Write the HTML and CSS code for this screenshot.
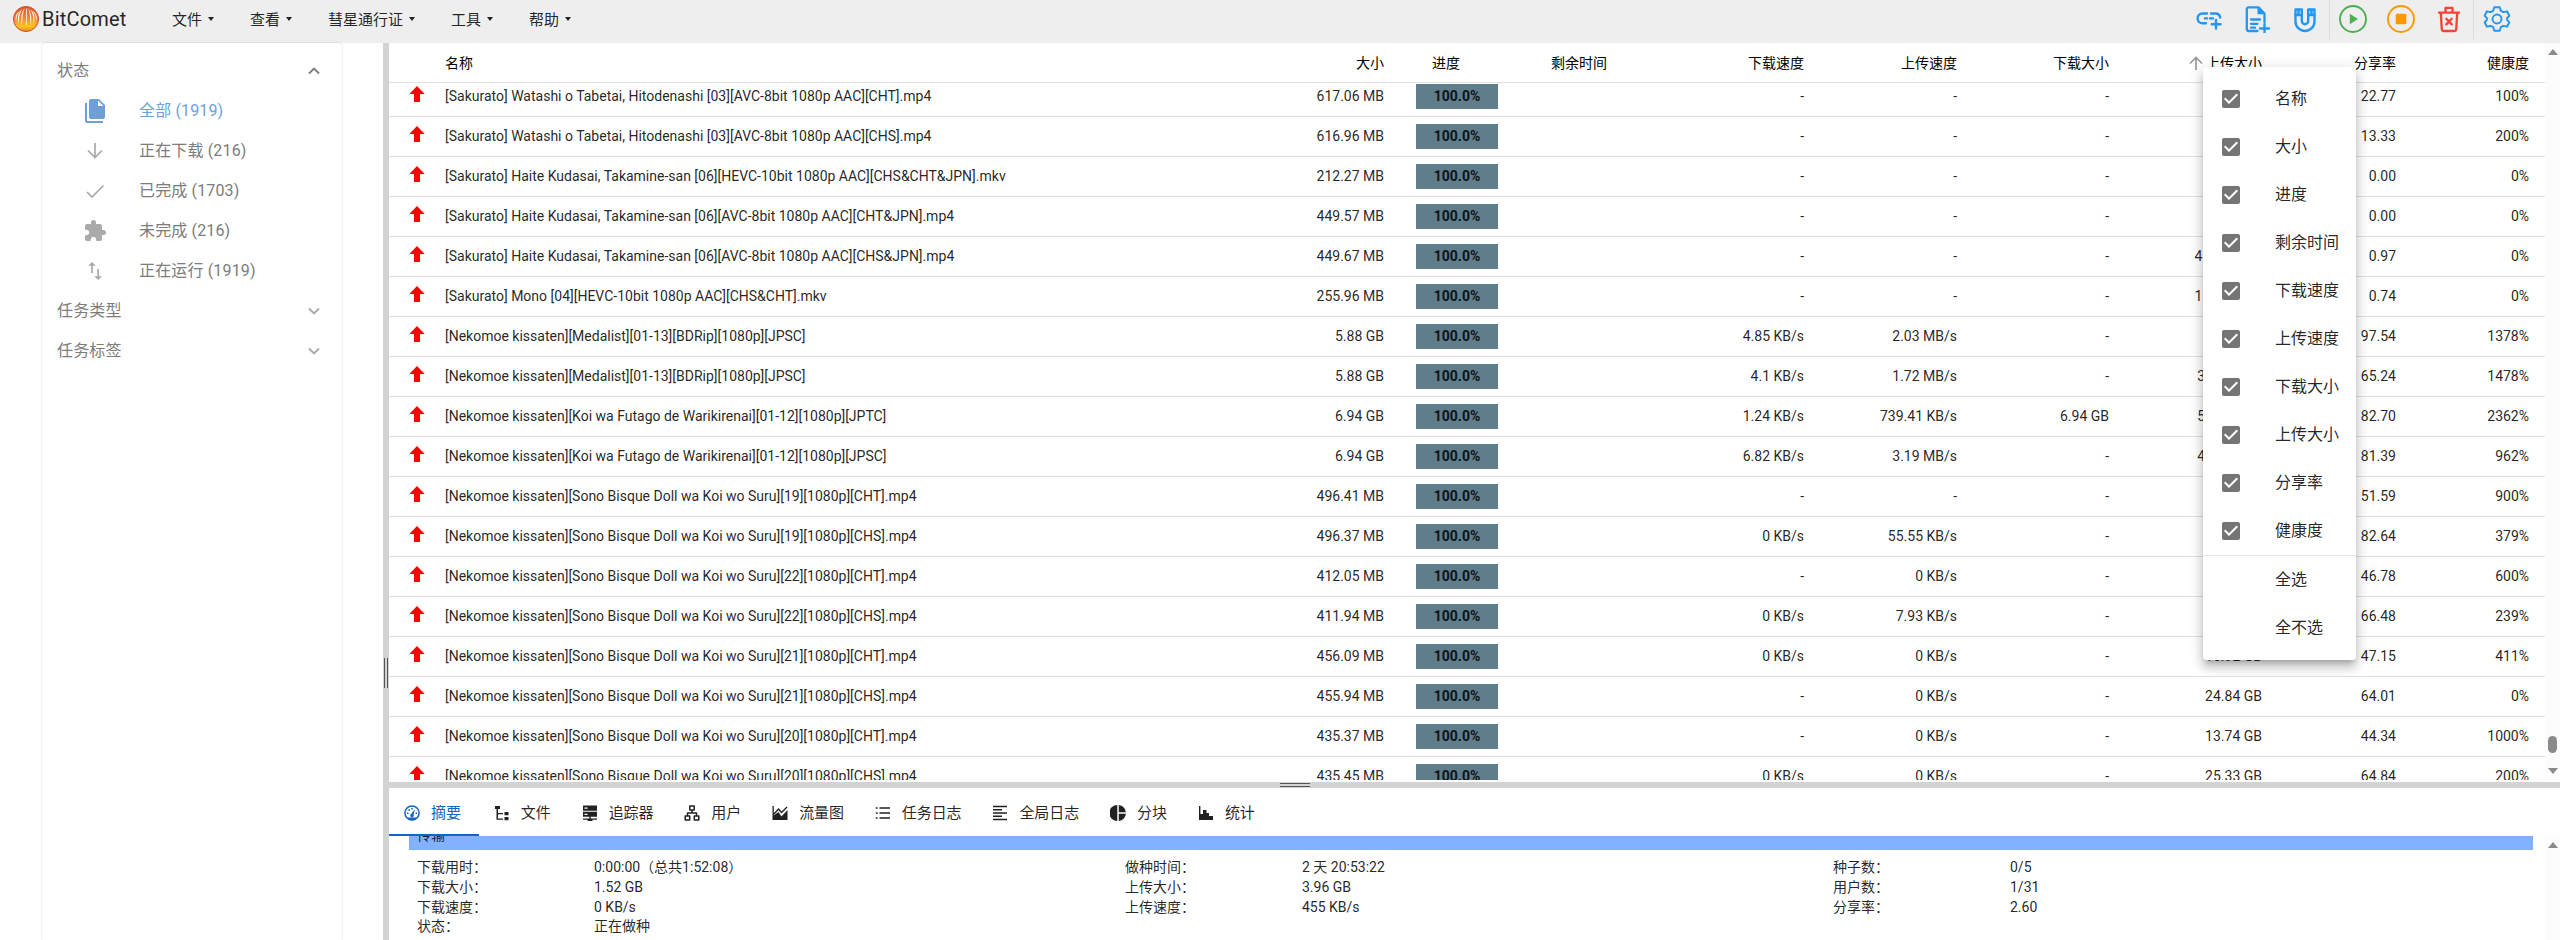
FILE: index.html
```
<!DOCTYPE html>
<html lang="zh-CN">
<head>
<meta charset="utf-8">
<title>BitComet</title>
<link rel="stylesheet" href="styles.css">
</head>
<body>
<div class="app">
  <header class="topbar">
    <div class="brand">
      <svg class="logo" viewBox="0 0 26 26"><defs><linearGradient id="lg" x1="0" y1="0" x2="0" y2="1"><stop offset="0" stop-color="#d9532c"/><stop offset=".45" stop-color="#f0873a"/><stop offset=".8" stop-color="#fcc21b"/><stop offset="1" stop-color="#e8872a"/></linearGradient></defs><circle cx="13" cy="13" r="12.5" fill="url(#lg)" stroke="#cf4a27"/><g fill="#fff3e0"><path d="M11.800 2C9.800 6 9.300 13 9 20.500 7.600 14 8 6 11.800 2z"/><path d="M13 2.500l.9 0-.2 16.500h-.7z"/><path d="M14.800 2c2.200 4 2.700 11 2.800 18.500C19 14 18.600 6 14.800 2z"/><path d="M9.500 3C6.500 7 5.800 12 6 18.500 4 12 4.800 6.500 9.500 3z"/><path d="M17 3c3 4 3.700 9 3.500 15.500C22.500 12 21.700 6.500 17 3z"/><path d="M7 4.800C4.200 8 3.500 11 3.300 15 1.800 11 3.300 7 7 4.800zM19.500 4.800c2.800 3.200 3.500 6.200 3.700 10.200 1.500-4 0-8-3.700-10.200z"/></g></svg>
      <span class="brand-name">BitComet</span>
    </div>
    <nav class="menu">
      <span class="menu-item">文件<i class="caret"></i></span>
      <span class="menu-item">查看<i class="caret"></i></span>
      <span class="menu-item">彗星通行证<i class="caret"></i></span>
      <span class="menu-item">工具<i class="caret"></i></span>
      <span class="menu-item">帮助<i class="caret"></i></span>
    </nav>
    <div class="tools">
      <span class="tool blue"><svg viewBox="0 0 28 28"><g class="ln" stroke-width="2.400"><path d="M12 8.500H7.500a4.900 4.900 0 0 0 0 9.800h3.500M10 13.400h2M15 13.400h3M16 8.500h4.500a4.900 4.900 0 0 1 4.700 4M21 15v8.500M16.800 19.200h8.700"/></g></svg></span>
      <span class="tool blue"><svg viewBox="0 0 28 28"><g class="ln" stroke-width="2.300"><path d="M14.500 26H5.500A1.700 1.700 0 0 1 3.800 24.300V4A1.700 1.700 0 0 1 5.500 2.300H15.500L21.500 8.500V17M8 14.500h9M8 18.800h6.500M8 22.700h4M21.500 19v9M17 23.500h9"/></g><path d="M14.500 2.300v7h7z" fill="currentColor"/></svg></span>
      <span class="tool blue"><svg viewBox="0 0 28 28"><g class="ln" stroke-width="2.400"><path d="M4.500 4.500h6.300V16a3.200 3.200 0 0 0 6.400 0V4.500h6.300V16.500a9.500 9.500 0 0 1-19 0z"/><path d="M4.500 10h6M17.500 10h6M7.500 5v4M20.500 5v4"/></g></svg></span>
      <span class="tool green sep"><svg viewBox="0 0 28 28"><circle class="ln" cx="14" cy="14" r="13" stroke-width="1.900"/><path d="M10.800 8.700v10.600l8.200-5.300z" fill="currentColor"/></svg></span>
      <span class="tool orange"><svg viewBox="0 0 28 28"><circle class="ln" cx="14" cy="14" r="13" stroke-width="1.900"/><rect x="8.700" y="8.700" width="10.600" height="10.600" rx="1.300" fill="currentColor"/></svg></span>
      <span class="tool red"><svg viewBox="0 0 28 28"><g class="ln" stroke-width="2.300"><path d="M4 7.700h20M10.500 7V2.800h7V7M5.800 8l1 16.500A1.800 1.800 0 0 0 8.600 26h10.800a1.800 1.800 0 0 0 1.800-1.500L22.200 8M11.300 13.800l5.400 5.600M16.700 13.800l-5.400 5.600"/></g></svg></span>
      <span class="tool blue sep"><svg viewBox="0 0 28 28"><g class="ln" stroke-width="1.900"><path d="M11.300 2.300h5.400l1.200 3.600 2.400 1.300 3.700-.9 2.400 4.400-2.300 2.500v1.600l2.300 2.500-2.400 4.400-3.700-.9-2.400 1.300-1.200 3.600h-5.400l-1.200-3.600-2.400-1.300-3.700.9-2.400-4.400 2.300-2.500v-1.600L1.600 10.700 4 6.300l3.700.9 2.400-1.300z"/><circle cx="14" cy="14" r="4.500"/></g></svg></span>
    </div>
  </header>

  <div class="body">
    <aside class="side">
      <div class="side-card">
        <div class="side-head">状态<svg viewBox="0 0 12 8"><path d="M1 6.500l5-5 5 5"/></svg></div>
        <div class="side-item active"><svg viewBox="0 0 24 24"><path fill="currentColor" d="M15,7H20.500L15,1.500V7M8,0H16L22,6V18A2,2 0 0,1 20,20H8C6.890,20 6,19.100 6,18V2A2,2 0 0,1 8,0M4,4V22H20V24H4A2,2 0 0,1 2,22V4H4Z"/></svg><span>全部 (1919)</span></div>
        <div class="side-item"><svg viewBox="0 0 24 24"><path class="th" d="M12 4v14M5 11.500l7 7 7-7"/></svg><span>正在下载 (216)</span></div>
        <div class="side-item"><svg viewBox="0 0 24 24"><path class="th" d="M4 13l5 5L20.500 6.500"/></svg><span>已完成 (1703)</span></div>
        <div class="side-item"><svg viewBox="0 0 24 24"><path fill="currentColor" d="M20.500,11H19V7C19,5.890 18.100,5 17,5H13V3.500A2.500,2.500 0 0,0 10.500,1A2.500,2.500 0 0,0 8,3.500V5H4A2,2 0 0,0 2,7V10.800H3.500C5,10.800 6.200,12 6.200,13.500C6.200,15 5,16.200 3.500,16.200H2V20A2,2 0 0,0 4,22H7.800V20.500C7.800,19 9,17.800 10.500,17.800C12,17.800 13.200,19 13.200,20.500V22H17A2,2 0 0,0 19,20V16H20.500A2.500,2.500 0 0,0 23,13.500A2.500,2.500 0 0,0 20.500,11Z"/></svg><span>未完成 (216)</span></div>
        <div class="side-item"><svg viewBox="0 0 24 24"><path fill="currentColor" d="M9 3L5.200 6.800H8.200V14H9.900V6.800H12.800zM16 17.200V10H14.300v7.200H11.200L15.100 21 19 17.200z"/></svg><span>正在运行 (1919)</span></div>
        <div class="side-head dim">任务类型<svg viewBox="0 0 12 8"><path d="M1 1.500l5 5 5-5"/></svg></div>
        <div class="side-head dim">任务标签<svg viewBox="0 0 12 8"><path d="M1 1.500l5 5 5-5"/></svg></div>
      </div>
    </aside>
    <div class="vsplit"><i></i><i></i></div>
    <main class="main">
      <section class="table">
        <div class="grid">
          <div class="row head">
            <span></span><span class="l">名称</span><span class="r">大小</span><span class="ph">进度</span><span class="l">剩余时间</span><span class="r">下载速度</span><span class="r">上传速度</span><span class="r">下载大小</span><span class="r"><svg class="sort" viewBox="0 0 14 14"><path d="M7 14V1.500M1 7.500l6-6 6 6"/></svg>上传大小</span><span class="r">分享率</span><span class="r">健康度</span>
          </div>
          <div class="rows"><div class="rows-inner" id="rows"></div></div>
        </div>
        <div class="scroll"><i class="up"></i><b class="thumb"></b><i class="down"></i></div>
      </section>
      <div class="hsplit"><i></i><i></i></div>
      <section class="detail">
        <div class="tabs">
          <span class="tab on"><svg viewBox="0 0 16 16"><circle class="ln" cx="8" cy="8" r="7.100" stroke-width="1.500"/><path fill="currentColor" d="M4 12.500h8v1.500l-4 1.500-4-1.500zM10.800 4.300L9.700 9.800a1.800 1.800 0 1 1-2.400-1z"/><circle cx="3.800" cy="8.300" r=".9" fill="currentColor"/><circle cx="5.200" cy="5" r=".9" fill="currentColor"/><circle cx="8" cy="3.700" r=".9" fill="currentColor"/><circle cx="12.300" cy="8.300" r=".9" fill="currentColor"/></svg>摘要</span>
          <span class="tab"><svg viewBox="0 0 16 16"><path fill="currentColor" d="M1 1h5v3H1zM10.500 7h4v3.200h-4zM10.500 12h4v3.200h-4zM2.500 4H4v4h5v1.300H4v4.200h5v1.300H2.500z"/></svg>文件</span>
          <span class="tab"><svg viewBox="0 0 16 16"><path fill="currentColor" d="M1 .5h14v5.300H1zM1 6.800h14v5H1zM7.300 11.500h1.400v2H15v1.300h-4.500V16h-5v-1.200H1v-1.300h6.300z"/><path d="M2.500 3.100h3M2.500 9.300h3" stroke="#fff" stroke-width="1.200"/></svg>追踪器</span>
          <span class="tab"><svg viewBox="0 0 16 16"><g class="ln" stroke-width="1.500"><path d="M5.800 1h4.400v4H5.800zM1.200 11h4.500v4H1.200zM10.300 11h4.500v4h-4.500zM8 5v3M3.500 11V8h9v3"/></g></svg>用户</span>
          <span class="tab"><svg viewBox="0 0 16 16"><path fill="currentColor" d="M.5 1h1.300v9.500L6.500 7l3 4.500L15.500 5v10H.5z"/><path d="M1.500 9.500l5-5.500 3 3.500L15 2" fill="none" stroke="currentColor" stroke-width="1.400"/></svg>流量图</span>
          <span class="tab"><svg viewBox="0 0 16 16"><path d="M4.500 3H15M4.500 8H15M4.500 13H15M.8 3h1.800M.8 8h1.800M.8 13h1.800" stroke="currentColor" stroke-width="1.500"/></svg>任务日志</span>
          <span class="tab"><svg viewBox="0 0 16 16"><path d="M1 1.500h14M1 4.700h9M1 8h14M1 11.300h9M1 14.500h14" stroke="currentColor" stroke-width="1.600"/></svg>全局日志</span>
          <span class="tab"><svg viewBox="0 0 16 16"><path fill="currentColor" d="M7.300 0v16A8 8 0 0 1 7.300 0zM8.800 0a8 8 0 0 1 7.100 7.200H8.800zM8.800 8.700h7.100A8 8 0 0 1 8.800 16z"/></svg>分块</span>
          <span class="tab"><svg viewBox="0 0 16 16"><path fill="currentColor" d="M1 1h1.400v8H5V5h3.500v3H11v3h4v4H1z"/></svg>统计</span>
        </div>
        <div class="detail-body">
          <div class="info">
            <div class="band">传输</div>
            <div class="facts">
              <span>下载用时：</span><span>0:00:00（总共1:52:08）</span><span>做种时间：</span><span>2 天 20:53:22</span><span>种子数：</span><span>0/5</span>
              <span>下载大小：</span><span>1.52 GB</span><span>上传大小：</span><span>3.96 GB</span><span>用户数：</span><span>1/31</span>
              <span>下载速度：</span><span>0 KB/s</span><span>上传速度：</span><span>455 KB/s</span><span>分享率：</span><span>2.60</span>
              <span>状态：</span><span>正在做种</span>
            </div>
          </div>
          <div class="scroll"><i class="up"></i></div>
        </div>
      </section>
    </main>
  </div>

  <div class="popup" id="popup"></div>
</div>
<script src="app.js"></script>
</body>
</html>
```
FILE: styles.css
```
* { box-sizing: border-box; }
body {
  margin: 0;
  background: #fff;
  color: rgba(0, 0, 0, .87);
  font: 14px/20px Roboto, "Noto Sans CJK SC", sans-serif;
  overflow: hidden;
}
svg { display: block; flex: none; }
.ln { fill: none; stroke: currentColor; stroke-linecap: round; stroke-linejoin: round; }
.app { height: 940px; display: flex; flex-direction: column; }

.topbar { height: 43px; flex: none; background: #eee; display: flex; align-items: flex-start; }
.brand { width: 148px; height: 38px; padding-left: 13px; display: flex; align-items: center; gap: 3px; }
.logo { width: 26px; height: 26px; }
.brand-name { font-size: 20px; letter-spacing: .2px; }
.menu { height: 39px; display: flex; align-items: center; font-size: 15px; }
.menu-item { padding: 0 24px; display: flex; align-items: center; position: relative; }
.caret { position: absolute; right: 12px; top: 7px; border: 3px solid transparent; border-top: 4px solid #222; border-bottom: 0; }
.tools { margin-left: auto; padding-right: 39px; display: flex; height: 39px; }
.tool { width: 48px; height: 39px; display: flex; justify-content: center; padding-top: 5px; border-left: 1px solid transparent; }
.tool svg { width: 28px; height: 28px; margin-left: -1px; }
.sep { border-left-color: #dcdcdc; }
.blue { color: #2196f3; }
.green { color: #4caf50; }
.orange { color: #ff9800; }
.red { color: #f44336; }

.body { flex: 1; min-height: 0; display: flex; }
.side { width: 383px; flex: none; padding-left: 42px; }
.side-card {
  width: 300px; height: 897px; padding: 8px 22px 0 15px;
  box-shadow: 0 0 2px rgba(0, 0, 0, .22); border-radius: 4px 4px 0 0;
  font-size: 16px; letter-spacing: .15px; color: #7c7c7c;
}
.side-head { height: 40px; display: flex; align-items: center; justify-content: space-between; }
.side-head svg { width: 12px; height: 8px; fill: none; stroke: #7c7c7c; stroke-width: 1.900; }
.side-head.dim svg { stroke: #a8a8a8; }
.side-item { height: 40px; display: flex; align-items: center; padding-left: 26px; }
.side-item svg { width: 24px; height: 24px; color: #aaa; margin-right: 32px; }
.side-item.active, .side-item.active svg { color: #6f9fd8; }
.th { fill: none; stroke: currentColor; stroke-width: 1.700; }

.vsplit { width: 6px; flex: none; background: #d3d3d3; display: flex; justify-content: center; gap: 2px; padding-top: 615px; }
.vsplit i { width: 1px; height: 30px; background: #555; }
.main { flex: 1; min-width: 0; display: flex; flex-direction: column; }
.table { height: 737px; display: flex; }
.grid { flex: 1; display: flex; flex-direction: column; }
.row {
  display: grid; height: 40px; align-items: center; border-bottom: 1px solid #e0e0e0;
  grid-template-columns: 46px 799px 160px 147px 120px 153px 153px 152px 153px 134px 133px;
}
.row span { padding: 0 10px; white-space: nowrap; }
.rows .row .t { padding-bottom: 1px; }
.head { color: #000; }
.row .r { text-align: right; }
.head .r { display: flex; justify-content: flex-end; align-items: center; }
.row .ph { padding-left: 38px; }
.row .arrow { padding-left: 20px; }
.arrow svg { width: 16px; height: 16px; margin-top: -5px; }
.row .pc { padding-left: 22px; }
.bar { display: block; width: 82px; height: 25px; line-height: 25px; background: #607d8b; text-align: center; font-weight: 700; font-size: 14px; }
.sort { width: 14px; height: 14px; margin-right: 3px; fill: none; stroke: #999; stroke-width: 1.700; }
.rows { flex: 1; overflow: hidden; position: relative; min-height: 0; }
.rows-inner { margin-top: -6px; }
.scroll { width: 15px; flex: none; background: #fcfcfc; display: flex; flex-direction: column; align-items: center; padding: 6px 0 6px; }
.up { border: 5px solid transparent; border-bottom: 6px solid #8a8a8a; border-top: 0; }
.down { border: 5px solid transparent; border-top: 6px solid #8a8a8a; border-bottom: 0; }
.thumb { margin: auto 0 15px; width: 9px; height: 17px; border-radius: 5px; background: #8a8a8a; }

.hsplit { height: 6px; margin-top: 2px; background: #d3d3d3; display: flex; flex-direction: column; align-items: center; gap: 2px; padding: 1px 359px 0 0; }
.hsplit i { width: 30px; height: 1px; background: #555; }
.detail { flex: 1; min-height: 0; display: flex; flex-direction: column; }
.tabs { height: 48px; flex: none; display: flex; font-size: 15px; letter-spacing: -.1px; }
.tab { display: flex; align-items: center; padding: 1px 16px 0 15px; gap: 11px; }
.tab svg { width: 16px; height: 16px; }
.tab.on { color: #1565c0; border-bottom: 2px solid #1565c0; padding-top: 3px; padding-right: 18px; }
.detail-body { flex: 1; min-height: 0; display: flex; overflow: hidden; }
.info { flex: 1; min-width: 0; padding: 0 12px 0 20px; }
.band { height: 24px; margin-top: -10px; padding-left: 8px; line-height: 19px; background: #82b1ff; }
.facts { display: grid; grid-template-columns: 177px 531px 177px 531px 177px 1fr; grid-auto-rows: 19.800px; padding: 7px 0 0 8px; white-space: nowrap; }

.popup {
  position: absolute; left: 2203px; top: 67px; width: 153px; height: 593px; padding: 8px 0;
  background: #fff; border-radius: 4px; font-size: 16px;
  box-shadow: 0 5px 5px -3px rgba(0,0,0,.2), 0 8px 10px 1px rgba(0,0,0,.14), 0 3px 14px 2px rgba(0,0,0,.12);
}
.opt { height: 48px; display: flex; align-items: center; padding-left: 16px; }
.opt svg { width: 24px; height: 24px; color: #757575; margin-right: 32px; }
.opt.plain { padding-left: 72px; }
.rule { height: 1px; background: #e4e4e4; }
```
FILE: app.js
```
const N = '[Nekomoe kissaten]';
const D = N + '[Sono Bisque Doll wa Koi wo Suru]';
const tasks = [
  ['[Sakurato] Watashi o Tabetai, Hitodenashi [03][AVC-8bit 1080p AAC][CHT].mp4', '617.06 MB', '-', '-', '-', '', '22.77', '100%'],
  ['[Sakurato] Watashi o Tabetai, Hitodenashi [03][AVC-8bit 1080p AAC][CHS].mp4', '616.96 MB', '-', '-', '-', '', '13.33', '200%'],
  ['[Sakurato] Haite Kudasai, Takamine-san [06][HEVC-10bit 1080p AAC][CHS&amp;CHT&amp;JPN].mkv', '212.27 MB', '-', '-', '-', '', '0.00', '0%'],
  ['[Sakurato] Haite Kudasai, Takamine-san [06][AVC-8bit 1080p AAC][CHT&amp;JPN].mp4', '449.57 MB', '-', '-', '-', '', '0.00', '0%'],
  ['[Sakurato] Haite Kudasai, Takamine-san [06][AVC-8bit 1080p AAC][CHS&amp;JPN].mp4', '449.67 MB', '-', '-', '-', '436.18 MB', '0.97', '0%'],
  ['[Sakurato] Mono [04][HEVC-10bit 1080p AAC][CHS&amp;CHT].mkv', '255.96 MB', '-', '-', '-', '189.41 MB', '0.74', '0%'],
  [N + '[Medalist][01-13][BDRip][1080p][JPSC]', '5.88 GB', '4.85 KB/s', '2.03 MB/s', '-', '', '97.54', '1378%'],
  [N + '[Medalist][01-13][BDRip][1080p][JPSC]', '5.88 GB', '4.1 KB/s', '1.72 MB/s', '-', '383.61 GB', '65.24', '1478%'],
  [N + '[Koi wa Futago de Warikirenai][01-12][1080p][JPTC]', '6.94 GB', '1.24 KB/s', '739.41 KB/s', '6.94 GB', '573.94 GB', '82.70', '2362%'],
  [N + '[Koi wa Futago de Warikirenai][01-12][1080p][JPSC]', '6.94 GB', '6.82 KB/s', '3.19 MB/s', '-', '464.85 GB', '81.39', '962%'],
  [D + '[19][1080p][CHT].mp4', '496.41 MB', '-', '-', '-', '', '51.59', '900%'],
  [D + '[19][1080p][CHS].mp4', '496.37 MB', '0 KB/s', '55.55 KB/s', '-', '', '82.64', '379%'],
  [D + '[22][1080p][CHT].mp4', '412.05 MB', '-', '0 KB/s', '-', '', '46.78', '600%'],
  [D + '[22][1080p][CHS].mp4', '411.94 MB', '0 KB/s', '7.93 KB/s', '-', '', '66.48', '239%'],
  [D + '[21][1080p][CHT].mp4', '456.09 MB', '0 KB/s', '0 KB/s', '-', '16.92 GB', '47.15', '411%'],
  [D + '[21][1080p][CHS].mp4', '455.94 MB', '-', '0 KB/s', '-', '24.84 GB', '64.01', '0%'],
  [D + '[20][1080p][CHT].mp4', '435.37 MB', '-', '0 KB/s', '-', '13.74 GB', '44.34', '1000%'],
  [D + '[20][1080p][CHS].mp4', '435.45 MB', '0 KB/s', '0 KB/s', '-', '25.33 GB', '64.84', '200%']
];
const arrow = '<svg viewBox="0 0 16 16"><path fill="#f00" d="M8 0l7.700 8H11v8H5V8H.3z"/></svg>';
document.getElementById('rows').innerHTML = tasks.map(t => {
  const [name, size, ...rest] = t;
  return `<div class="row"><span class="arrow">${arrow}</span><span class="t">${name}</span><span class="r t">${size}</span><span class="pc"><b class="bar">100.0%</b></span><span></span>` +
    rest.map(v => `<span class="r t">${v}</span>`).join('') + '</div>';
}).join('');

const box = '<svg viewBox="0 0 24 24"><path fill="currentColor" d="M19 3H5c-1.110 0-2 .9-2 2v14c0 1.100.890 2 2 2h14c1.110 0 2-.9 2-2V5c0-1.100-.890-2-2-2zm-9 14l-5-5 1.410-1.410L10 14.170l7.590-7.590L19 8l-9 9z"/></svg>';
document.getElementById('popup').innerHTML =
  ['名称', '大小', '进度', '剩余时间', '下载速度', '上传速度', '下载大小', '上传大小', '分享率', '健康度']
    .map(n => `<div class="opt">${box}${n}</div>`).join('') +
  '<div class="rule"></div><div class="opt plain">全选</div><div class="opt plain">全不选</div>';
```
